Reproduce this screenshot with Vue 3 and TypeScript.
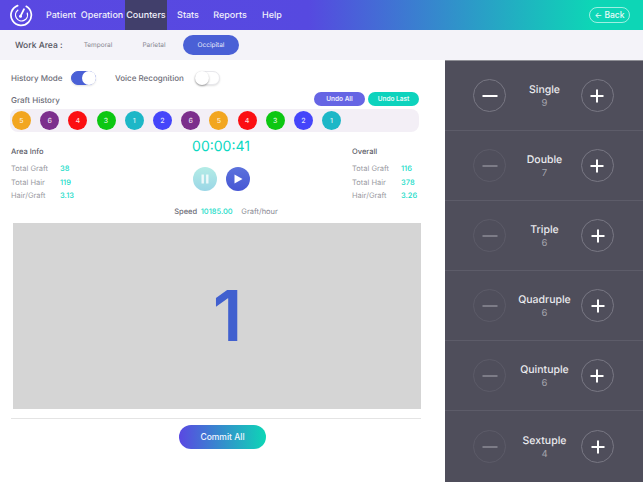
<script setup lang="ts">
// Counters screen: work area tabs, graft history and the per-type counters.
const navItems = ['Patient', 'Operation', 'Counters', 'Stats', 'Reports', 'Help']
const areas = ['Temporal', 'Parietal', 'Occipital']

const colors: Record<number, string> = {
  1: '#1db7c7',
  2: '#4545fa',
  3: '#0cc712',
  4: '#fb0f12',
  5: '#f2a620',
  6: '#7c2f8c',
}
const history = [5, 6, 4, 3, 1, 2, 6, 5, 4, 3, 2, 1]

const areaInfo = [
  { label: 'Total Graft', value: '38' },
  { label: 'Total Hair', value: '119' },
  { label: 'Hair/Graft', value: '3.13' },
]
const overall = [
  { label: 'Total Graft', value: '116' },
  { label: 'Total Hair', value: '378' },
  { label: 'Hair/Graft', value: '3.26' },
]
const counters = [
  { name: 'Single', count: 9, active: true },
  { name: 'Double', count: 7, active: false },
  { name: 'Triple', count: 6, active: false },
  { name: 'Quadruple', count: 6, active: false },
  { name: 'Quintuple', count: 6, active: false },
  { name: 'Sextuple', count: 4, active: false },
]
</script>

<template>
  <div class="app">
    <header class="topbar">
      <svg class="logo" width="24" height="24" viewBox="0 0 24 24" fill="none" stroke="#fff" stroke-linecap="round">
        <path d="M8.6 2.6A10.2 10.2 0 1 0 17.2 3.3" stroke-width="1.7" />
        <path d="M8.8 7.2A6 6 0 1 0 18.3 10.2" stroke-width="1.3" />
        <path d="M11.5 13.2 15 6.2" stroke-width="1.8" />
        <circle cx="11.5" cy="13.2" r="1.5" fill="#fff" stroke="none" />
      </svg>
      <nav class="nav">
        <a v-for="item in navItems" :key="item" class="nav-item" :class="{ current: item === 'Counters' }">{{ item }}</a>
      </nav>
      <button class="back-btn"><span class="back-arrow">←</span> Back</button>
    </header>

    <div class="workbar">
      <span class="work-label">Work Area :</span>
      <div class="tabs">
        <span v-for="a in areas" :key="a" class="tab" :class="{ selected: a === 'Occipital' }">{{ a }}</span>
      </div>
    </div>

    <div class="body">
      <main class="left">
        <div class="toggles">
          <span class="toggle-label history-label">History Mode</span>
          <span class="switch on"><i></i></span>
          <span class="toggle-label voice">Voice Recognition</span>
          <span class="switch"><i></i></span>
        </div>

        <div class="history-head">
          <span class="toggle-label graft-label">Graft History</span>
          <div class="undo">
            <button class="pill purple">Undo All</button>
            <button class="pill teal">Undo Last</button>
          </div>
        </div>
        <div class="history">
          <span v-for="(n, i) in history" :key="i" class="dot" :style="{ background: colors[n] }">{{ n }}</span>
        </div>

        <section class="stats">
          <div class="stat-col">
            <h4>Area Info</h4>
            <div v-for="s in areaInfo" :key="s.label" class="stat-row">
              <span>{{ s.label }}</span><b>{{ s.value }}</b>
            </div>
          </div>
          <div class="timer-col">
            <div class="timer">00:00:41</div>
            <div class="controls">
              <span class="ctl pause">
                <svg width="10" height="10" viewBox="0 0 10 10" fill="#fff" opacity="0.8"><rect x="1.5" y="0.5" width="2.4" height="9" /><rect x="6.1" y="0.5" width="2.4" height="9" /></svg>
              </span>
              <span class="ctl play">
                <svg width="10" height="10" viewBox="0 0 10 10" fill="#fff"><path d="M1.5 0.5 9.5 5 1.5 9.5Z" /></svg>
              </span>
            </div>
            <div class="speed"><span class="speed-label">Speed</span> <b>10185.00</b> <span class="speed-unit">Graft/hour</span></div>
          </div>
          <div class="stat-col">
            <h4>Overall</h4>
            <div v-for="s in overall" :key="s.label" class="stat-row">
              <span>{{ s.label }}</span><b>{{ s.value }}</b>
            </div>
          </div>
        </section>

        <div class="display"><span class="display-num">1</span></div>
        <div class="commit-row">
          <button class="commit">Commit All</button>
        </div>
      </main>

      <aside class="panel">
        <div v-for="c in counters" :key="c.name" class="counter">
          <button class="round" :class="{ dim: !c.active }">
            <svg width="16" height="16" viewBox="0 0 16 16"><rect x="0.5" y="7" width="15" height="2" fill="currentColor" /></svg>
          </button>
          <div class="counter-text">
            <div class="counter-name">{{ c.name }}</div>
            <div class="counter-num">{{ c.count }}</div>
          </div>
          <button class="round">
            <svg width="16" height="16" viewBox="0 0 16 16"><path d="M7 1.5h2V7h5.5v2H9v5.5H7V9H1.5V7H7z" fill="currentColor" /></svg>
          </button>
        </div>
      </aside>
    </div>
  </div>
</template>

<style>
html, body { margin: 0; background: #fff; }
</style>

<style scoped>
.app {
  width: 643px;
  height: 482px;
  overflow: hidden;
  display: flex;
  flex-direction: column;
  font-family: Inter, "Liberation Sans", sans-serif;
  text-rendering: geometricPrecision;
}
.topbar {
  height: 30px;
  flex: none;
  display: flex;
  align-items: center;
  background: linear-gradient(90deg, #5a48e2 0%, #5649e0 48%, #0dd6b6 92%);
  border-bottom: 1px solid #62d4d6;
  box-sizing: content-box;
  margin-bottom: -1px;
}
.logo { margin-left: 9px; flex: none; }
.nav { display: flex; margin-left: 10px; height: 100%; }
.nav-item {
  height: 100%;
  width: 42px;
  flex: none;
  display: flex;
  align-items: center;
  justify-content: center;
  color: #f0effb;
  font-size: 9px;
  font-weight: 500;
}
.nav-item:nth-child(1) { width: 36px; }
.nav-item:nth-child(2) { width: 46px; }
.nav-item.current { background: #413f6b; }
.back-btn {
  margin-left: auto;
  margin-right: 13px;
  width: 41px;
  height: 16px;
  padding: 0;
  border: 1px solid rgba(255,255,255,0.6);
  border-radius: 8px;
  background: transparent;
  color: #e9fbf8;
  font: 500 8.5px Inter, sans-serif;
}
.back-arrow { font-size: 8px; }
.workbar {
  height: 30px;
  flex: none;
  display: flex;
  align-items: center;
  background: #f4f3f9;
  padding-left: 15px;
}
.work-label { font-size: 8.5px; color: #55555f; font-weight: 500; width: 55px; padding-top: 1px; }
.tabs { display: flex; align-items: center; }
.tab { font-size: 6.5px; color: #85858f; width: 56px; text-align: center; }
.tab.selected {
  height: 20px;
  margin-left: 1px;
  line-height: 20px;
  border-radius: 10px;
  background: #4a60d6;
  color: #e8ebfb;
}
.body { flex: 1; display: flex; min-height: 0; }
.left { width: 445px; flex: none; background: #fff; padding: 0 22px 0 11px; box-sizing: border-box; }
.toggles { display: flex; align-items: center; height: 15px; margin-top: 10px; }
.toggle-label { font-size: 8px; color: #6d6d78; font-weight: 500; white-space: nowrap; }
.history-label { width: 49px; }
.voice { margin-left: 19px; width: 69px; }
.switch {
  width: 25px;
  height: 14px;
  margin-left: 11px;
  border-radius: 7px;
  background: #fff;
  border: 1px solid #e8e8ec;
  box-sizing: border-box;
  position: relative;
  box-shadow: 0 1px 2px rgba(0,0,0,0.12);
}
.switch i {
  position: absolute;
  left: -1px;
  top: -1px;
  width: 14px;
  height: 14px;
  border-radius: 50%;
  background: #fff;
  box-shadow: 0 1px 2px rgba(0,0,0,0.35);
}
.switch.on { background: #4a60d6; border-color: #4a60d6; }
.switch.on i { left: 10px; box-shadow: none; }
.history-head {
  display: flex;
  justify-content: space-between;
  align-items: flex-end;
  height: 15px;
  margin-top: 6px;
  padding-right: 4px;
}
.graft-label { margin-bottom: 1px; }
.undo { display: flex; gap: 3px; }
.pill {
  height: 14px;
  padding: 0;
  border: 0;
  border-radius: 7px;
  color: #eef;
  font: 600 6.5px Inter, sans-serif;
}
.pill.purple { width: 51px; background: #6665e4; }
.pill.teal { width: 51px; background: #0dd3bd; color: #e8fbf8; }
.history {
  margin-top: 3px;
  margin-right: 4px;
  margin-left: -1px;
  height: 23px;
  border-radius: 8px;
  background: #f3eff6;
  display: flex;
  align-items: center;
  padding-left: 2px;
  gap: 9.2px;
}
.dot {
  width: 19px;
  height: 19px;
  flex: none;
  border-radius: 50%;
  color: rgba(255,255,255,0.85);
  font-size: 7px;
  font-weight: 500;
  display: flex;
  align-items: center;
  justify-content: center;
}
.stats {
  display: flex;
  justify-content: space-between;
  height: 79px;
  margin-top: 6px;
  padding-right: 3px;
}
.stat-col { width: 68px; padding-top: 9px; }
.stat-col h4 { margin: 0 0 6px; font-size: 7.5px; font-weight: 500; color: #5c5c68; }
.stat-row { display: flex; height: 13.6px; align-items: center; font-size: 7.5px; color: #9a9aa2; }
.stat-row span { width: 49px; }
.stat-row b { font-weight: 500; color: #17dcc8; }
.timer-col { display: flex; flex-direction: column; align-items: center; width: 180px; margin-left: 11px; }
.timer { font-size: 14px; font-weight: 400; color: #0bd8c2; height: 18px; line-height: 18px; }
.controls { display: flex; gap: 9px; margin-top: 11px; }
.ctl {
  width: 24px;
  height: 24px;
  border-radius: 50%;
  display: flex;
  align-items: center;
  justify-content: center;
}
.ctl.pause { background: linear-gradient(180deg, #b4ece6, #9ad6e6); }
.ctl.play { background: linear-gradient(180deg, #5c72dc, #4656d4); }
.speed { margin-top: 16px; font-size: 7.5px; white-space: nowrap; margin-left: 10px; word-spacing: 1.5px; }
.speed-label { color: #6d6d78; font-weight: 500; }
.speed b { font-weight: 500; color: #17dcc8; }
.speed-unit { color: #8a8a94; margin-left: 5px; }
.display {
  margin: 6px 0 0 2px;
  width: 408px;
  height: 186px;
  background: #d5d5d5;
  display: flex;
  align-items: center;
  justify-content: center;
}
.display-num {
  margin-left: 21px;
  color: #4160cf;
  font-size: 70px;
  font-weight: 600;
  line-height: 1;
}
.commit-row {
  margin-top: 9px;
  border-top: 1px solid #e4e4e4;
  width: 410px;
  box-sizing: border-box;
  display: flex;
  justify-content: center;
  padding: 6px 0 0 13px;
}
.commit {
  width: 87px;
  height: 24px;
  border: 0;
  padding: 0;
  border-radius: 12px;
  background: linear-gradient(90deg, #5a48e2, #0dd6b6);
  color: #f2f6ff;
  font: 500 8.5px Inter, sans-serif;
}
.panel {
  flex: 1;
  background: #4f4e5b;
  border-top: 1px solid #8f8f96;
  box-sizing: border-box;
  display: flex;
  flex-direction: column;
}
.counter {
  height: 70.1px;
  flex: none;
  box-sizing: border-box;
  border-bottom: 1px solid #5d5c69;
  display: flex;
  align-items: center;
  padding: 0 29px 0 28px;
  justify-content: space-between;
}
.counter:last-child { border-bottom: 0; }
.round {
  width: 33px;
  height: 33px;
  padding: 0;
  border-radius: 50%;
  border: 1px solid #787783;
  background: transparent;
  color: #fff;
  display: flex;
  align-items: center;
  justify-content: center;
}
.round.dim { border-color: #5c5b68; color: #7d7c87; }
.counter-text { text-align: center; padding: 2px 0 0 2px; }
.counter-name { font-size: 10.5px; font-weight: 500; color: #eaeaee; line-height: 13px; }
.counter-num { font-size: 9.5px; color: #a3a3ab; line-height: 15px; }
</style>
